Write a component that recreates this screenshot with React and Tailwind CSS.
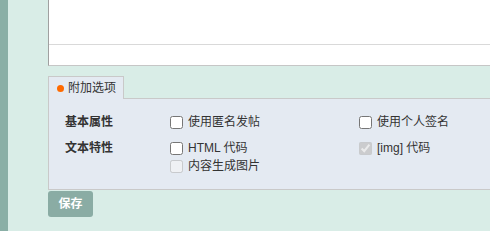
import React from 'react'

const font = { fontFamily: '"Liberation Sans", "Noto Sans CJK SC", sans-serif' }

function Check({ checked = false, disabled = false, label }) {
  return (
    <label className="flex items-center gap-[5px] h-[18px] text-[#333]">
      <input
        type="checkbox"
        defaultChecked={checked}
        disabled={disabled}
        className="m-0 w-[13px] h-[13px]"
      />
      <span>{label}</span>
    </label>
  )
}

export default function App() {
  return (
    <div className="flex h-[231px] w-[490px] overflow-hidden text-[12px]" style={font}>
      <div className="w-2 shrink-0 bg-[#8aafa6]"></div>
      <div className="flex-1 bg-[#d9ede7] pl-10">
        {/* editor box */}
        <div className="h-[66px] bg-white border-l border-b border-l-[#a0a0a0] border-b-[#c6c6c6]">
          <div className="h-[45px] border-b border-[#d9d9d9]"></div>
        </div>

        {/* tabs */}
        <div className="mt-[10px] flex h-[23px] border-b border-[#c9c9c9]">
          <div className="w-[76px] -mb-px flex items-center gap-[4px] pl-[8px] bg-[#e4eaf2] border border-b-0 border-[#c9c9c9] text-[#333]">
            <span className="w-[7px] h-[7px] rounded-full bg-[#ff6a00]"></span>
            <span>附加选项</span>
          </div>
        </div>

        {/* options panel */}
        <div className="bg-[#e4eaf2] border-l border-b border-[#c9c9c9] pl-4 pt-[14px] pb-[14px]">
          <div className="flex">
            <div className="w-[105px] font-bold text-[#333] leading-[18px]">基本属性</div>
            <div className="w-[189px]"><Check label="使用匿名发帖" /></div>
            <div><Check label="使用个人签名" /></div>
          </div>
          <div className="flex mt-[8px]">
            <div className="w-[105px] font-bold text-[#333] leading-[18px]">文本特性</div>
            <div className="w-[189px] flex flex-col">
              <Check label="HTML 代码" />
              <Check label="内容生成图片" disabled />
            </div>
            <div><Check label="[img] 代码" checked disabled /></div>
          </div>
        </div>

        <button className="mt-[1px] w-[45px] h-[26px] rounded-[3px] bg-[#8aaca4] text-white font-bold">
          保存
        </button>
      </div>
    </div>
  )
}
